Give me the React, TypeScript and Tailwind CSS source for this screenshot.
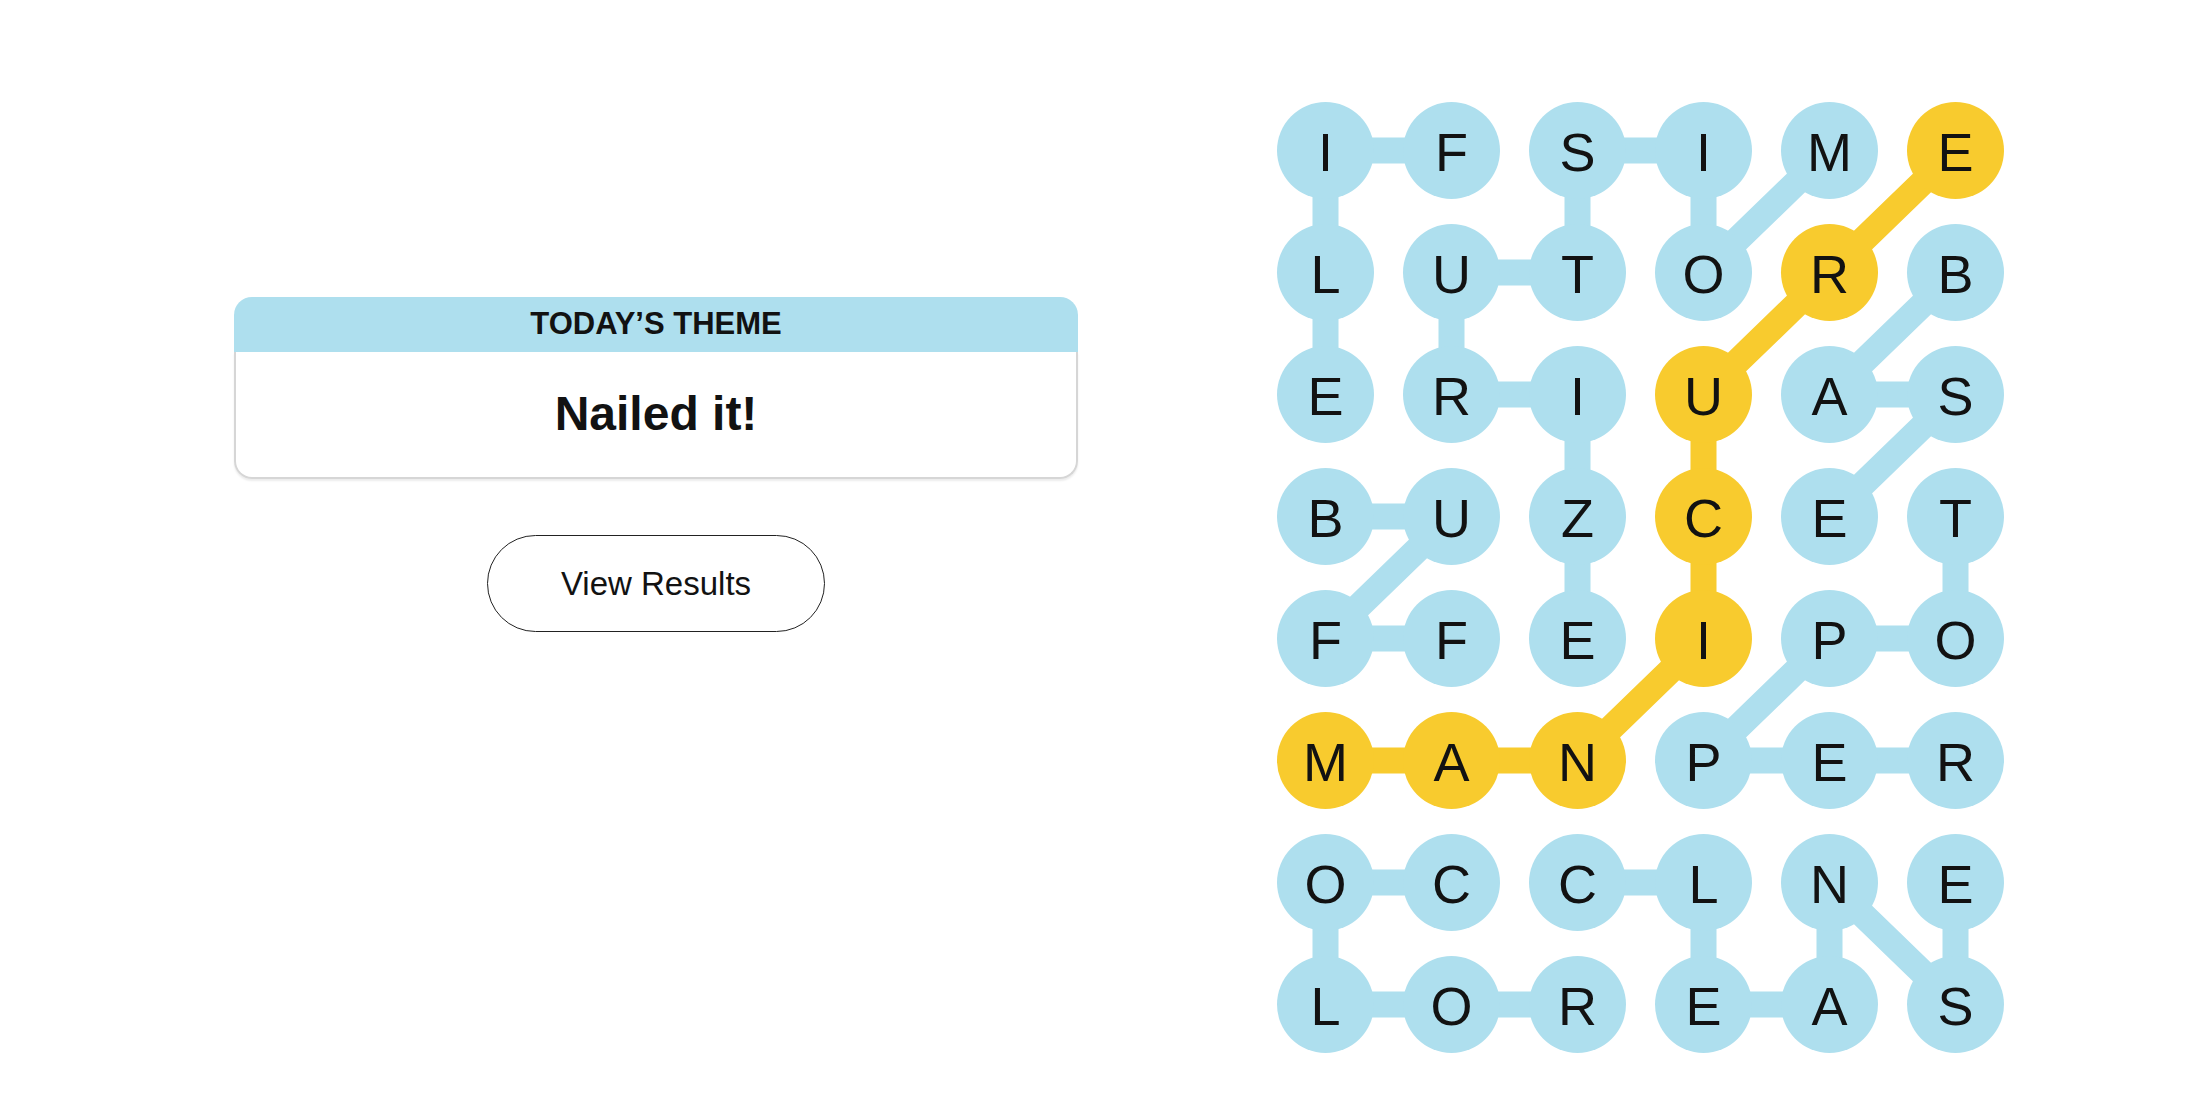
import { Fragment } from 'react';

const BLUE = '#aedfee';
const YELLOW = '#f8cb2e';

const CELL = 97;
const PITCH_X = 126;
const PITCH_Y = 122;

const rows = [
  'IFSIME',
  'LUTORB',
  'ERIUAS',
  'BUZCET',
  'FFEIPO',
  'MANPER',
  'OCCLNE',
  'LOREAS',
];

type Cell = [number, number];

// found theme words, as [row, col] paths
const words: Cell[][] = [
  [[0, 1], [0, 0], [1, 0], [2, 0]],
  [[0, 4], [1, 3], [0, 3], [0, 2], [1, 2], [1, 1], [2, 1], [2, 2], [3, 2], [4, 2]],
  [[1, 5], [2, 4], [2, 5], [3, 4]],
  [[3, 5], [4, 5], [4, 4], [5, 3], [5, 4], [5, 5]],
  [[3, 0], [3, 1], [4, 0], [4, 1]],
  [[6, 1], [6, 0], [7, 0], [7, 1], [7, 2]],
  [[6, 2], [6, 3], [7, 3], [7, 4], [6, 4], [7, 5], [6, 5]],
];

const spangram: Cell[] = [[5, 0], [5, 1], [5, 2], [4, 3], [3, 3], [2, 3], [1, 4], [0, 5]];

const center = ([r, c]: Cell) => ({
  x: CELL / 2 + c * PITCH_X,
  y: CELL / 2 + r * PITCH_Y,
});

const isSpangram = (r: number, c: number) => spangram.some(([sr, sc]) => sr === r && sc === c);

function Path({ cells, color }: { cells: Cell[]; color: string }) {
  const pts = cells.map(center).map((p) => `${p.x},${p.y}`).join(' ');
  return <polyline points={pts} fill="none" stroke={color} strokeWidth={26} strokeLinejoin="round" />;
}

function Board() {
  const width = CELL + PITCH_X * 5;
  const height = CELL + PITCH_Y * 7;

  return (
    <div className="relative">
      <svg className="absolute inset-0" width={width} height={height} viewBox={`0 0 ${width} ${height}`}>
        {words.map((w, i) => (
          <Path key={i} cells={w} color={BLUE} />
        ))}
        <Path cells={spangram} color={YELLOW} />
      </svg>
      <div className="relative grid grid-cols-[repeat(6,97px)] gap-x-[29px] gap-y-[25px]">
        {rows.map((row, r) => (
          <Fragment key={r}>
            {row.split('').map((ch, c) => (
              <div
                key={c}
                className={`flex h-[97px] w-[97px] items-center justify-center rounded-full pt-[3px] text-[54px] text-[#121212] ${
                  isSpangram(r, c) ? 'bg-[#f8cb2e]' : 'bg-[#aedfee]'
                }`}
              >
                {ch}
              </div>
            ))}
          </Fragment>
        ))}
      </div>
    </div>
  );
}

export default function App() {
  return (
    <div className="flex min-h-screen bg-white font-['Liberation_Sans',Arial,sans-serif] text-[#121212]">
      <div className="flex w-[1078px] flex-col items-center pl-[234px] pt-[297px]">
        <div className="w-[844px]">
          <div className="flex h-[55px] items-center justify-center rounded-t-[18px] bg-[#aedfee] text-[31px] font-bold">
            TODAY’S THEME
          </div>
          <div className="flex h-[127px] items-center justify-center rounded-b-[18px] border-x-2 border-b-2 border-[#d6d6d6] pb-[2px] text-[48px] font-bold shadow-[0_2px_2px_rgba(0,0,0,0.08)]">
            Nailed it!
          </div>
        </div>
        <button className="mt-[56px] flex h-[97px] w-[338px] items-center justify-center rounded-full border-[1.5px] border-[#222] bg-white text-[33px]">
          View Results
        </button>
      </div>
      <div className="ml-[199px] pt-[102px]">
        <Board />
      </div>
    </div>
  );
}
